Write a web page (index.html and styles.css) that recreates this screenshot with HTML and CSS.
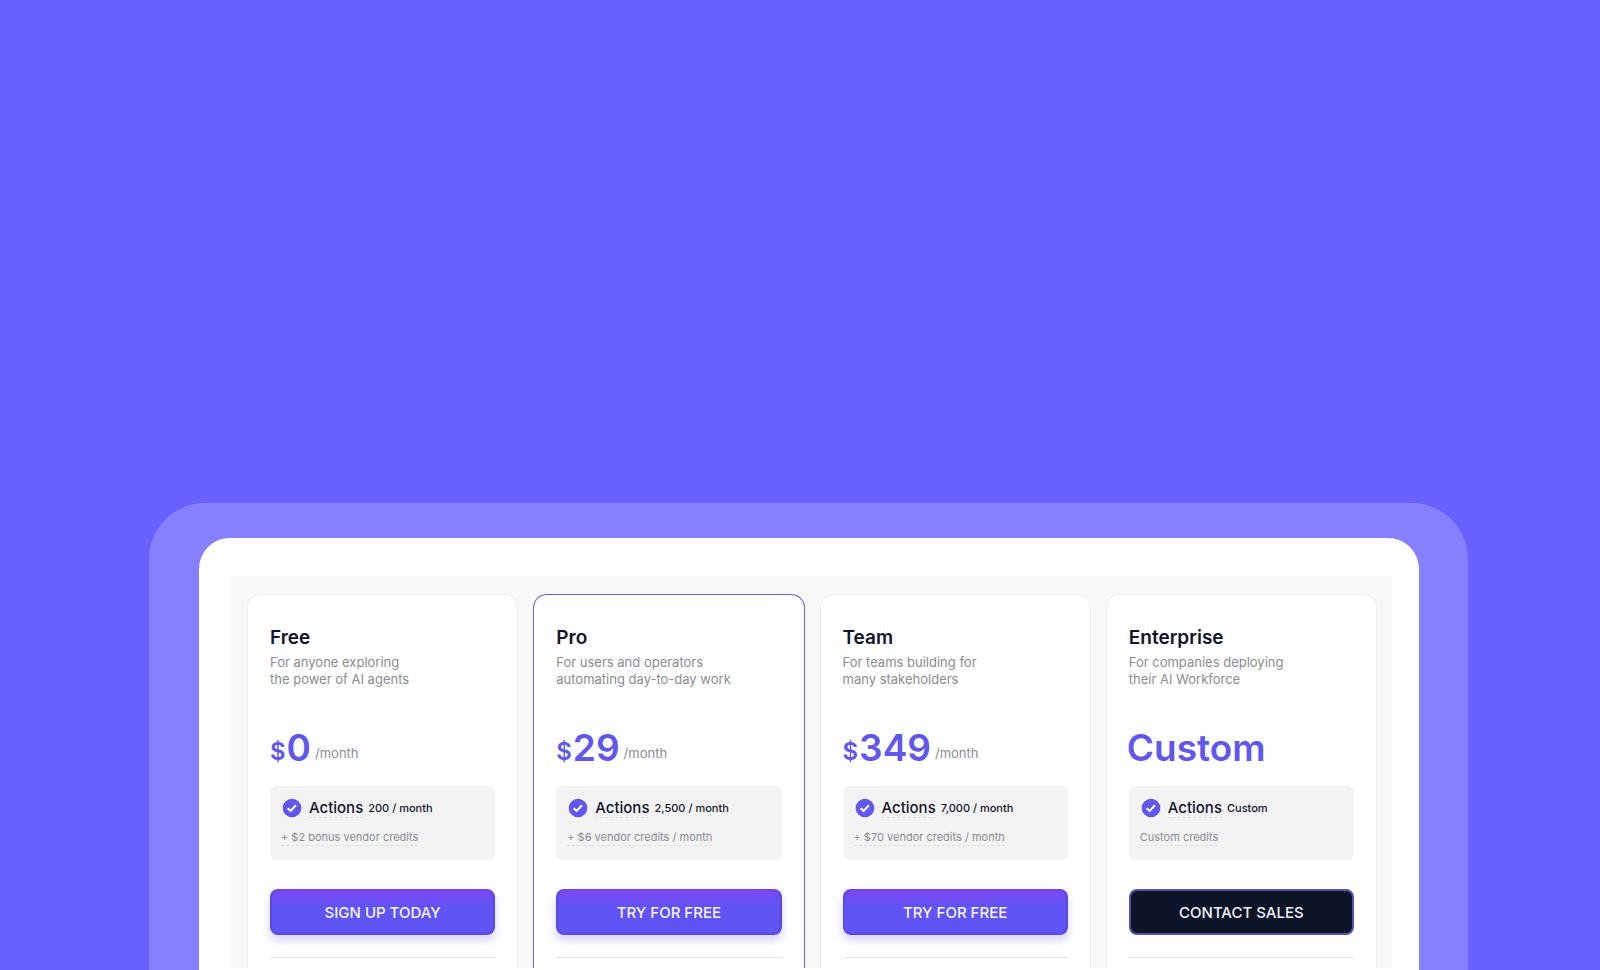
FILE: index.html
```html
<!DOCTYPE html>
<html lang="en">
<head>
	<meta charset="UTF-8">
	<title>Pricing</title>
	<link rel="stylesheet" href="styles.css">
</head>
<body>
	<!-- shared tick icon -->
	<svg class="sprite" aria-hidden="true">
		<symbol id="tick" viewBox="0 0 20 20">
			<circle cx="10" cy="10" r="9.3" fill="#6156ed"/>
			<path d="M5.6 10.2l3 2.7L14 7.3" fill="none" stroke="#fff" stroke-width="2.1"/>
		</symbol>
	</svg>
	<main class="frame">
		<div class="panel">
			<div class="plans">
				<section class="card">
					<h2>Free</h2>
					<p class="desc">For anyone exploring<br>the power of AI agents</p>
					<div class="price"><span class="cur">$</span><span class="num">0</span><span class="per">/month</span></div>
					<div class="quota">
						<div class="row">
							<svg class="tick"><use href="#tick"/></svg>
							<span class="name">Actions</span>
							<span class="amount">200 / month</span>
						</div>
						<span class="credits">+ $2 bonus vendor credits</span>
					</div>
					<button type="button" class="btn">SIGN UP TODAY</button>
					<hr>
				</section>
				<section class="card active">
					<h2>Pro</h2>
					<p class="desc">For users and operators<br>automating day-to-day work</p>
					<div class="price"><span class="cur">$</span><span class="num">29</span><span class="per">/month</span></div>
					<div class="quota">
						<div class="row">
							<svg class="tick"><use href="#tick"/></svg>
							<span class="name">Actions</span>
							<span class="amount">2,500 / month</span>
						</div>
						<span class="credits">+ $6 vendor credits / month</span>
					</div>
					<button type="button" class="btn">TRY FOR FREE</button>
					<hr>
				</section>
				<section class="card">
					<h2>Team</h2>
					<p class="desc">For teams building for<br>many stakeholders</p>
					<div class="price"><span class="cur">$</span><span class="num">349</span><span class="per">/month</span></div>
					<div class="quota">
						<div class="row">
							<svg class="tick"><use href="#tick"/></svg>
							<span class="name">Actions</span>
							<span class="amount">7,000 / month</span>
						</div>
						<span class="credits">+ $70 vendor credits / month</span>
					</div>
					<button type="button" class="btn">TRY FOR FREE</button>
					<hr>
				</section>
				<section class="card">
					<h2>Enterprise</h2>
					<p class="desc">For companies deploying<br>their AI Workforce</p>
					<div class="price"><span class="num word">Custom</span></div>
					<div class="quota">
						<div class="row">
							<svg class="tick"><use href="#tick"/></svg>
							<span class="name">Actions</span>
							<span class="amount">Custom</span>
						</div>
						<span class="credits">Custom credits</span>
					</div>
					<button type="button" class="btn dark">CONTACT SALES</button>
					<hr>
				</section>
			</div>
		</div>
	</main>
</body>
</html>
```
FILE: styles.css
```css
*{
	margin: 0;
	padding: 0;
	box-sizing: border-box;
}
body{
	min-height: 100vh;
	padding: 503px 132px 0 149px;
	background-color: #6861ff;
	font-family: Inter, "Liberation Sans", sans-serif;
	color: #12132b;
}
.sprite{
	display: none;
}
.frame{
	padding: 35px 49px 0 50px;
	border-radius: 56px 56px 0 0;
	background-color: #8680ff;
}
.panel{
	padding: 38px 27px 2px 32px;
	border-radius: 31px 31px 0 0;
	background-color: #fff;
}
.plans{
	display: grid;
	grid-template-columns: repeat(4, 1fr);
	gap: 15px;
	padding: 18px 15px 0 16px;
	background-color: #f8f8f8;
}
.card{
	padding: 30px 22px 10px;
	border: 1px solid #eeeef0;
	border-bottom: 0;
	border-radius: 14px 14px 0 0;
	background-color: #fff;
}
.card.active{
	border-color: #6b5fe0;
}
h2{
	font-size: 19px;
	font-weight: 600;
	line-height: 26px;
}
.desc{
	margin-top: 3px;
	font-size: 13px;
	line-height: 17px;
	color: #8b8c91;
}
.price{
	display: flex;
	align-items: flex-end;
	height: 48px;
	margin-top: 35px;
	color: #6156ed;
}
.cur{
	font-size: 24px;
	font-weight: 600;
	line-height: 38px;
}
.num{
	margin-left: 1px;
	font-size: 37px;
	font-weight: 600;
	line-height: 46px;
}
.word{
	margin-left: -2px;
}
.per{
	margin-left: 4px;
	font-size: 13px;
	line-height: 36px;
	color: #8b8c91;
}
.quota{
	height: 74px;
	margin-top: 15px;
	padding: 10px 11px 0;
	border-radius: 6px;
	background-color: #f3f3f4;
}
.row{
	display: flex;
	align-items: center;
	height: 24px;
}
.tick{
	width: 20px;
	height: 20px;
	margin: 0 7px 0 1px;
}
.name{
	margin-right: 5px;
	border-bottom: 1px dashed #dcdde2;
	font-size: 15px;
	font-weight: 500;
	line-height: 19px;
}
.amount{
	font-size: 11px;
	font-weight: 500;
}
.credits{
	display: inline-block;
	margin-top: 9px;
	border-bottom: 1px dashed #dcdde2;
	font-size: 11px;
	line-height: 16px;
	color: #8b8c91;
	vertical-align: top;
}
.btn{
	display: block;
	width: 100%;
	height: 46px;
	margin-top: 29px;
	border: 2px solid #5a4be0;
	border-top-color: #7443e8;
	border-radius: 8px;
	background: linear-gradient(#7b48f5, #6153f3 35%, #5d55f3);
	box-shadow: 0 5px 10px rgba(97, 86, 237, .28);
	font-family: inherit;
	font-size: 15px;
	font-weight: 500;
	color: #f4f3ff;
}
.btn.dark{
	border-color: #5450ac;
	background: #0c1428;
	box-shadow: none;
}
hr{
	margin-top: 22px;
	border: 0;
	border-top: 1px solid #e6e6e9;
}
```
